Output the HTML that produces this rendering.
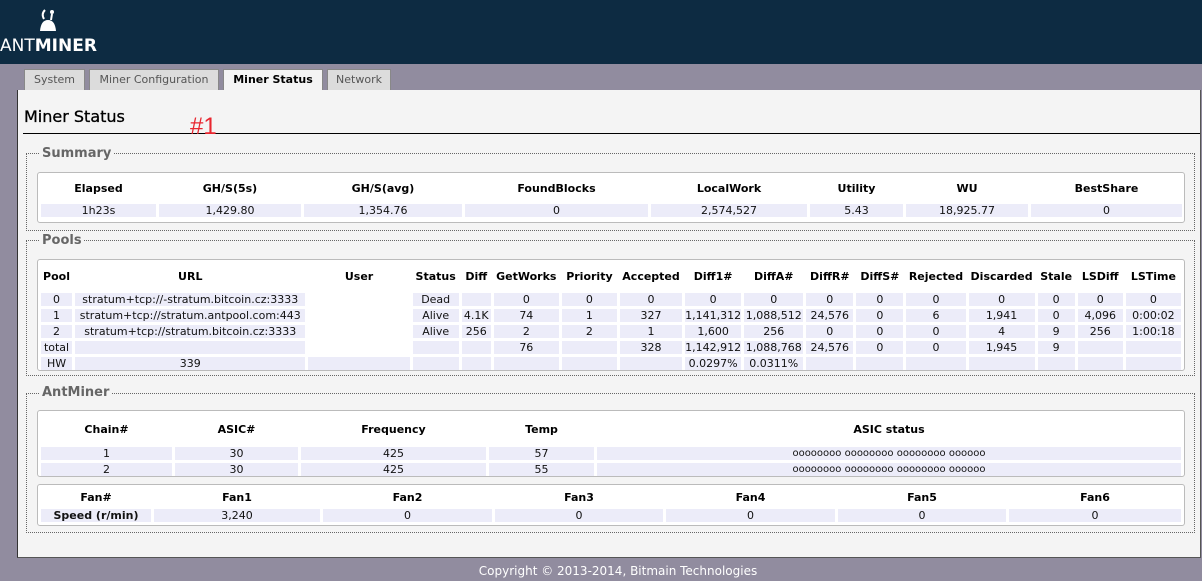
<!DOCTYPE html>
<html><head><meta charset="utf-8"><style>
*{margin:0;padding:0;box-sizing:border-box}
body{width:1202px;height:581px;background:#918c9f;font-family:"DejaVu Sans","Liberation Sans",sans-serif;font-size:11px;color:#111;position:relative;overflow:hidden}
.hdr{position:absolute;left:0;top:0;width:1202px;height:64px;background:#0d2b42}
.logo{position:absolute;left:0;top:36px;color:#fff;font-size:17px;letter-spacing:0px;font-family:"DejaVu Sans",sans-serif}
.logo b{font-weight:bold}
.tab{position:absolute;top:69px;height:21px;background:#dcdcdc;border:1px solid #888;border-bottom:none;color:#555;font-size:11px;padding-top:3px;text-align:center}
.tab.act{background:#f4f4f4;color:#000;font-weight:bold;height:22px}
.panel{position:absolute;left:17px;top:90px;width:1184px;height:468px;background:#f4f4f4;border-left:1px solid #333;border-bottom:1px solid #555;border-right:1px solid #555}
h1{position:absolute;left:24px;top:107px;font-size:16px;font-weight:normal;color:#000;-webkit-text-stroke:.3px #000}
.hr{position:absolute;left:23px;top:133px;width:1177px;height:1px;background:#000}
.n1{position:absolute;left:190px;top:113px;color:#e8262f;font-size:24px;font-family:"Liberation Sans",sans-serif}
fieldset{position:absolute;left:26px;width:1169px;border:1px dotted #666}
.lg{position:absolute;left:40px;background:#f4f4f4;padding:0 2px;color:#666;font-weight:bold;font-size:13px}
.box{position:absolute;left:37px;width:1148px;background:#fff;border:1px solid #bbb;border-radius:3px}
table{border-collapse:separate;border-spacing:3px;table-layout:fixed;width:1146px}
td,th{text-align:center;padding:0;white-space:nowrap;overflow:hidden;font-size:11px}
th{font-weight:bold;color:#000}
td{background:#ececf9;height:13px;line-height:13px}
td.w{background:#fff}
.ft{position:absolute;left:0;width:1236px;top:564px;text-align:center;color:#fff;font-size:12px}
</style></head><body>
<div class="hdr">
<svg style="position:absolute;left:38px;top:8px" width="20" height="24" viewBox="0 0 20 24"><path d="M7 2 Q3 6 6 11" stroke="#fff" stroke-width="2" fill="none"/><circle cx="14" cy="4" r="2" fill="#fff"/><path d="M14 6 L13 12" stroke="#fff" stroke-width="2"/><path d="M2 23 Q3 12 10 12 Q17 12 18 23 Z" fill="#fff"/></svg>
<div class="logo">ANT<b>MINER</b></div>
</div>
<div class="tab" style="left:24px;width:61px">System</div>
<div class="tab" style="left:89px;width:130px">Miner Configuration</div>
<div class="tab act" style="left:223px;width:100px">Miner Status</div>
<div class="tab" style="left:327px;width:64px">Network</div>
<div class="panel"></div>
<h1>Miner Status</h1>
<div class="hr"></div>
<div class="n1">#1</div>

<fieldset style="top:153px;height:78px"></fieldset>
<div class="lg" style="top:146px">Summary</div>
<div class="box" style="top:172px;height:51px"><table>
<col style="width:115px"><col style="width:142px"><col style="width:158px"><col style="width:183px"><col style="width:156px"><col style="width:93px"><col style="width:122px"><col style="width:151px">
<tr style="height:25px"><th>Elapsed</th><th>GH/S(5s)</th><th>GH/S(avg)</th><th>FoundBlocks</th><th>LocalWork</th><th>Utility</th><th>WU</th><th>BestShare</th></tr>
<tr><td>1h23s</td><td>1,429.80</td><td>1,354.76</td><td>0</td><td>2,574,527</td><td>5.43</td><td>18,925.77</td><td>0</td></tr>
</table></div>

<fieldset style="top:240px;height:136px"></fieldset>
<div class="lg" style="top:233px">Pools</div>
<div class="box" style="top:259px;height:112px"><table>
<col style="width:31px"><col style="width:230px"><col style="width:101px"><col style="width:46px"><col style="width:29px"><col style="width:65px"><col style="width:55px"><col style="width:62px"><col style="width:56px"><col style="width:59px"><col style="width:47px"><col style="width:47px"><col style="width:59px"><col style="width:66px"><col style="width:37px"><col style="width:45px"><col style="width:55px">
<tr style="height:27px"><th>Pool</th><th>URL</th><th>User</th><th>Status</th><th>Diff</th><th>GetWorks</th><th>Priority</th><th>Accepted</th><th>Diff1#</th><th>DiffA#</th><th>DiffR#</th><th>DiffS#</th><th>Rejected</th><th>Discarded</th><th>Stale</th><th>LSDiff</th><th>LSTime</th></tr>
<tr><td>0</td><td>stratum+tcp://-stratum.bitcoin.cz:3333</td><td class="w" rowspan="4"></td><td>Dead</td><td></td><td>0</td><td>0</td><td>0</td><td>0</td><td>0</td><td>0</td><td>0</td><td>0</td><td>0</td><td>0</td><td>0</td><td>0</td></tr>
<tr><td>1</td><td>stratum+tcp://stratum.antpool.com:443</td><td>Alive</td><td>4.1K</td><td>74</td><td>1</td><td>327</td><td>1,141,312</td><td>1,088,512</td><td>24,576</td><td>0</td><td>6</td><td>1,941</td><td>0</td><td>4,096</td><td>0:00:02</td></tr>
<tr><td>2</td><td>stratum+tcp://stratum.bitcoin.cz:3333</td><td>Alive</td><td>256</td><td>2</td><td>2</td><td>1</td><td>1,600</td><td>256</td><td>0</td><td>0</td><td>0</td><td>4</td><td>9</td><td>256</td><td>1:00:18</td></tr>
<tr><td>total</td><td></td><td></td><td></td><td>76</td><td></td><td>328</td><td>1,142,912</td><td>1,088,768</td><td>24,576</td><td>0</td><td>0</td><td>1,945</td><td>9</td><td></td><td></td></tr>
<tr><td>HW</td><td>339</td><td></td><td></td><td></td><td></td><td></td><td></td><td>0.0297%</td><td>0.0311%</td><td></td><td></td><td></td><td></td><td></td><td></td><td></td></tr>
</table></div>

<fieldset style="top:393px;height:140px"></fieldset>
<div class="lg" style="top:385px">AntMiner</div>
<div class="box" style="top:410px;height:67px"><table>
<col style="width:131px"><col style="width:123px"><col style="width:185px"><col style="width:105px"><col>
<tr style="height:30px"><th>Chain#</th><th>ASIC#</th><th>Frequency</th><th>Temp</th><th>ASIC status</th></tr>
<tr><td>1</td><td>30</td><td>425</td><td>57</td><td style="font-size:10px">oooooooo oooooooo oooooooo oooooo</td></tr>
<tr><td>2</td><td>30</td><td>425</td><td>55</td><td style="font-size:10px">oooooooo oooooooo oooooooo oooooo</td></tr>
</table></div>
<div class="box" style="top:484px;height:42px"><table>
<col style="width:110px"><col style="width:166px"><col style="width:169px"><col style="width:168px"><col style="width:169px"><col style="width:168px"><col>
<tr style="height:18px"><th>Fan#</th><th>Fan1</th><th>Fan2</th><th>Fan3</th><th>Fan4</th><th>Fan5</th><th>Fan6</th></tr>
<tr><td style="font-weight:bold">Speed (r/min)</td><td>3,240</td><td>0</td><td>0</td><td>0</td><td>0</td><td>0</td></tr>
</table></div>
<div class="ft">Copyright © 2013-2014, Bitmain Technologies</div>
</body></html>
